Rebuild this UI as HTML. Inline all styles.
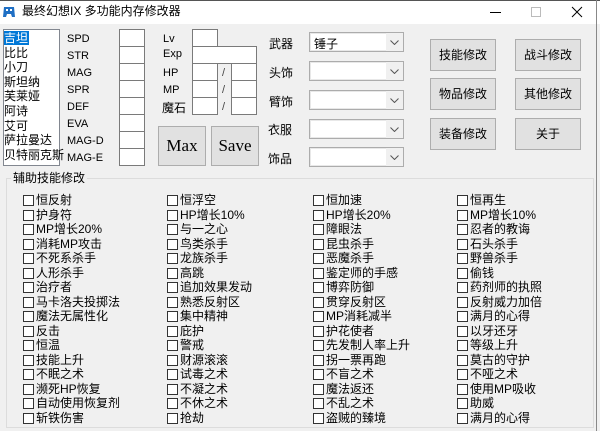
<!DOCTYPE html>
<html><head><meta charset="utf-8"><style>
*{margin:0;padding:0;box-sizing:border-box}
body{width:600px;height:431px;overflow:hidden;background:#f0f0f0;font-family:"Liberation Sans","Noto Sans CJK SC",sans-serif;font-size:12px;color:#000;position:relative}
.a{position:absolute;white-space:nowrap}
.tb{position:absolute;left:0;top:0;width:600px;height:24px;background:#fff}
.in{position:absolute;background:#fff;border:1px solid #7a7a7a}
.lbl{position:absolute;font-size:11px;line-height:13px}
.btn{position:absolute;background:#e1e1e1;border:1px solid #adadad;text-align:center}
.cb{position:absolute;width:11px;height:11px;border:1px solid #333;background:#fff}
.ct{position:absolute;font-size:12px;line-height:14px;white-space:nowrap}
.combo{position:absolute;width:95px;height:20px;background:#fff;border:1px solid #acacac;box-shadow:inset 0 0 0 1px #e8e8e8}
.combo .ar{position:absolute;right:0;top:0;width:17px;height:18px;background:#f0f0f0}
.combo svg{position:absolute;right:4px;top:7px}
</style></head><body>
<div class="tb"></div>
<div class="a" style="left:0;top:0;width:600px;height:1px;background:#555"></div>
<svg class="a" style="left:2px;top:5px" width="14" height="14" viewBox="0 0 14 14"><path d="M2 2h10l1 10h-3l-1-3h-4l-1 3H1z" fill="#1f6fc4"/><rect x="4" y="4" width="2" height="2" fill="#fff"/><rect x="8" y="4" width="2" height="2" fill="#fff"/></svg>
<div class="a" style="left:22px;top:4px;font-size:12px;line-height:15px">最终幻想IX 多功能内存修改器</div>
<div class="a" style="left:490px;top:12px;width:11px;height:1px;background:#000"></div>
<div class="a" style="left:531px;top:7px;width:10px;height:10px;border:1px solid #bbb"></div>
<svg class="a" style="left:571px;top:6px" width="12" height="12"><path d="M1 1L11 11M11 1L1 11" stroke="#000" stroke-width="1"/></svg>

<div class="in" style="left:3px;top:29px;width:57px;height:137px;border-color:#828790"></div>
<div class="a" style="left:4px;top:31px;width:25px;height:14px;background:#0078d7"></div>
<div class="a" style="left:4px;top:31px;font-size:12px;line-height:14.6px">
<span style="color:#fff">吉坦</span><br>比比<br>小刀<br>斯坦纳<br>芙莱娅<br>阿诗<br>艾可<br>萨拉曼达<br>贝特丽克斯</div>

<div class="lbl" style="left:67px;top:31px;line-height:17px">SPD<br>STR<br>MAG<br>SPR<br>DEF<br>EVA<br>MAG-D<br>MAG-E</div>
<div class="in" style="left:119px;top:29px;width:26px;height:18px"></div>
<div class="in" style="left:119px;top:46px;width:26px;height:18px"></div>
<div class="in" style="left:119px;top:63px;width:26px;height:18px"></div>
<div class="in" style="left:119px;top:80px;width:26px;height:18px"></div>
<div class="in" style="left:119px;top:97px;width:26px;height:18px"></div>
<div class="in" style="left:119px;top:114px;width:26px;height:18px"></div>
<div class="in" style="left:119px;top:131px;width:26px;height:18px"></div>
<div class="in" style="left:119px;top:148px;width:26px;height:18px"></div>

<div class="lbl" style="left:163px;top:33px">Lv</div>
<div class="lbl" style="left:163px;top:48px">Exp</div>
<div class="lbl" style="left:163px;top:67px">HP</div>
<div class="lbl" style="left:163px;top:84px">MP</div>
<div class="a" style="left:162px;top:99px;font-size:12px">魔石</div>
<div class="in" style="left:192px;top:29px;width:26px;height:18px"></div>
<div class="in" style="left:192px;top:46px;width:65px;height:18px"></div>
<div class="in" style="left:192px;top:63px;width:26px;height:18px"></div>
<div class="in" style="left:192px;top:80px;width:26px;height:18px"></div>
<div class="in" style="left:192px;top:97px;width:26px;height:18px"></div>
<div class="in" style="left:231px;top:63px;width:26px;height:18px"></div>
<div class="in" style="left:231px;top:80px;width:26px;height:18px"></div>
<div class="in" style="left:231px;top:97px;width:26px;height:18px"></div>
<div class="lbl" style="left:222px;top:67px;color:#444">/</div>
<div class="lbl" style="left:222px;top:84px;color:#444">/</div>
<div class="lbl" style="left:222px;top:101px;color:#444">/</div>

<div class="btn" style="left:158px;top:126px;width:48px;height:40px;font-family:'Liberation Serif',serif;font-size:17px;line-height:38px">Max</div>
<div class="btn" style="left:211px;top:126px;width:48px;height:40px;font-family:'Liberation Serif',serif;font-size:17px;line-height:38px">Save</div>

<div class="a" style="left:269px;top:35px">武器</div>
<div class="a" style="left:269px;top:64px">头饰</div>
<div class="a" style="left:269px;top:93px">臂饰</div>
<div class="a" style="left:268px;top:121px">衣服</div>
<div class="a" style="left:268px;top:150px">饰品</div>
<div class="combo" style="left:309px;top:32px"><span class="a" style="left:4px;top:2px">锤子</span><div class="ar"></div><svg width="9" height="5"><path d="M0.5 0.5L4.5 4.5L8.5 0.5" fill="none" stroke="#555"/></svg></div>
<div class="combo" style="left:309px;top:61px"><div class="ar"></div><svg width="9" height="5"><path d="M0.5 0.5L4.5 4.5L8.5 0.5" fill="none" stroke="#555"/></svg></div>
<div class="combo" style="left:309px;top:90px"><div class="ar"></div><svg width="9" height="5"><path d="M0.5 0.5L4.5 4.5L8.5 0.5" fill="none" stroke="#555"/></svg></div>
<div class="combo" style="left:309px;top:119px"><div class="ar"></div><svg width="9" height="5"><path d="M0.5 0.5L4.5 4.5L8.5 0.5" fill="none" stroke="#555"/></svg></div>
<div class="combo" style="left:309px;top:147px"><div class="ar"></div><svg width="9" height="5"><path d="M0.5 0.5L4.5 4.5L8.5 0.5" fill="none" stroke="#555"/></svg></div>

<div class="btn" style="left:430px;top:39px;width:66px;height:32px;line-height:30px">技能修改</div>
<div class="btn" style="left:515px;top:39px;width:66px;height:32px;line-height:30px">战斗修改</div>
<div class="btn" style="left:430px;top:78px;width:66px;height:32px;line-height:30px">物品修改</div>
<div class="btn" style="left:515px;top:78px;width:66px;height:32px;line-height:30px">其他修改</div>
<div class="btn" style="left:430px;top:118px;width:66px;height:32px;line-height:30px">装备修改</div>
<div class="btn" style="left:515px;top:118px;width:66px;height:32px;line-height:30px">关于</div>

<div class="a" style="left:6px;top:178px;width:588px;height:250px;border:1px solid #dcdcdc"></div>
<div class="a" style="left:11px;top:171px;background:#f0f0f0;padding:0 2px;line-height:15px">辅助技能修改</div>
<div class="a" style="left:596px;top:0;width:1px;height:431px;background:#888"></div>
<div id="g"></div>
<script>
var cols=[[23,"恒反射,护身符,MP增长20%,消耗MP攻击,不死系杀手,人形杀手,治疗者,马卡洛夫投掷法,魔法无属性化,反击,恒温,技能上升,不眠之术,濒死HP恢复,自动使用恢复剂,斩铁伤害"],
[167,"恒浮空,HP增长10%,与一之心,鸟类杀手,龙族杀手,高跳,追加效果发动,熟悉反射区,集中精神,庇护,警戒,财源滚滚,试毒之术,不凝之术,不休之术,抢劫"],
[313,"恒加速,HP增长20%,障眼法,昆虫杀手,恶魔杀手,鉴定师的手感,博弈防御,贯穿反射区,MP消耗减半,护花使者,先发制人率上升,拐一票再跑,不盲之术,魔法返还,不乱之术,盗贼的臻境"],
[457,"恒再生,MP增长10%,忍者的教诲,石头杀手,野兽杀手,偷钱,药剂师的执照,反射威力加倍,满月的心得,以牙还牙,等级上升,莫古的守护,不哑之术,使用MP吸收,助威,满月的心得"]];
var h="";cols.forEach(function(c){c[1].split(",").forEach(function(t,i){var y=195+i*14.5;h+='<div class="cb" style="left:'+c[0]+'px;top:'+y+'px"></div><div class="ct" style="left:'+(c[0]+13)+'px;top:'+(y-2)+'px">'+t+'</div>';});});
document.getElementById("g").innerHTML=h;
</script>
</body></html>
